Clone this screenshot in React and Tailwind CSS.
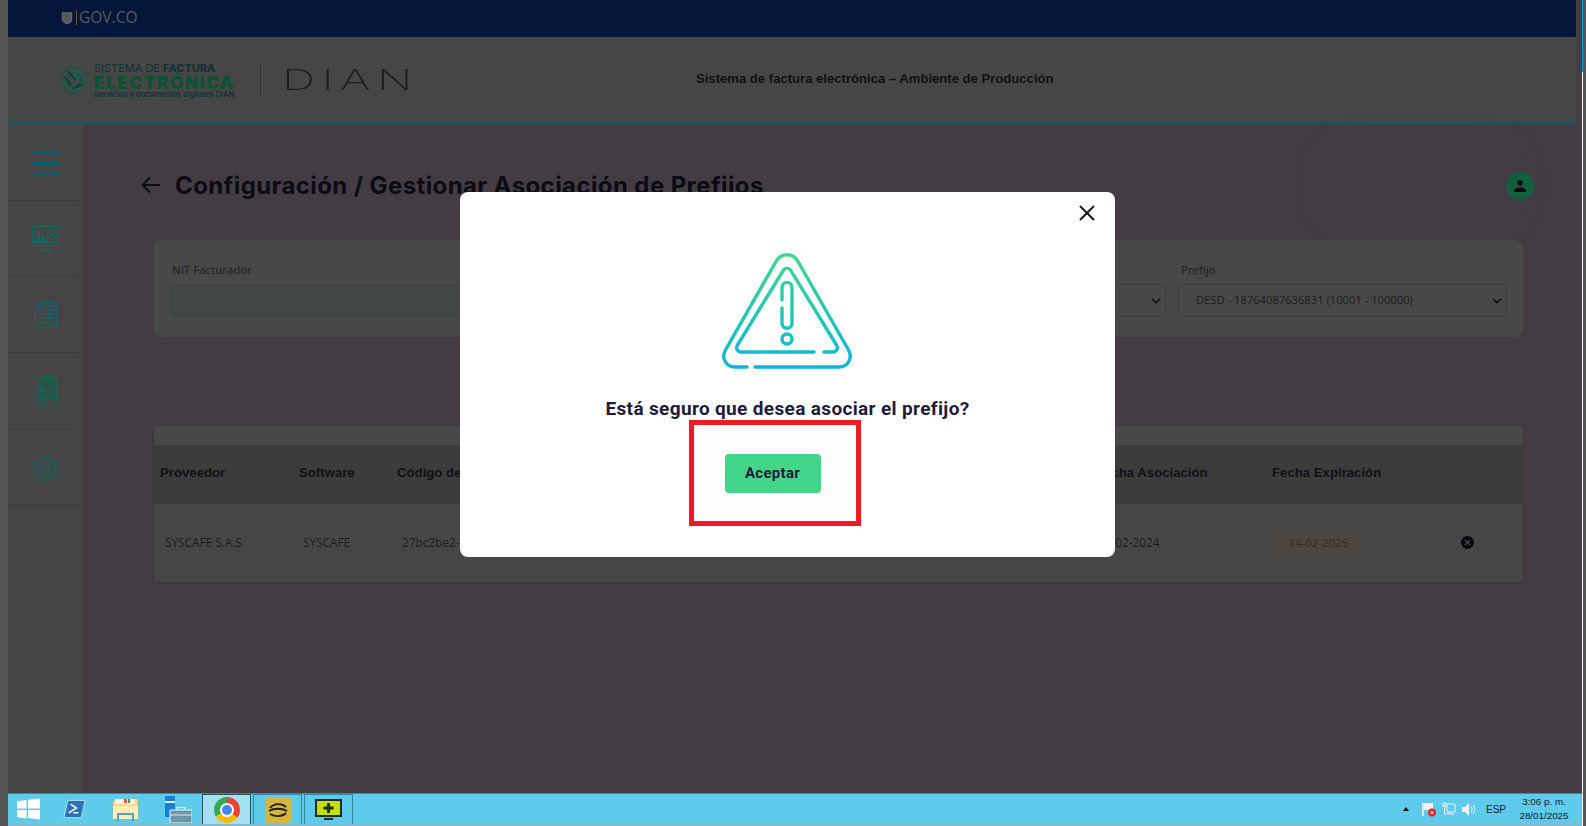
import { X, ChevronDown } from 'lucide-react';

const columnas = [
  { titulo: 'Proveedor', ancho: 'w-[145px]', pl: 'pl-[6px]' },
  { titulo: 'Software', ancho: 'w-[98px]', pl: 'pl-0' },
  { titulo: 'Código de Software', ancho: 'w-[699px]', pl: 'pl-0' },
  { titulo: 'Fecha Asociación', ancho: 'w-[176px]', pl: 'pl-0' },
  { titulo: 'Fecha Expiración', ancho: 'w-[196px]', pl: 'pl-0' },
];

function Hamburguesa() {
  return (
    <div className="flex w-7 flex-col gap-[8px] pt-[2px]">
      <div className="h-[3px] rounded bg-[#05606e]"></div>
      <div className="h-[3px] rounded bg-[#05606e]"></div>
      <div className="h-[3px] rounded bg-[#05606e]"></div>
    </div>
  );
}

function IconoMonitor() {
  return (
    <svg width="30" height="28" viewBox="0 0 30 28" fill="none" stroke="#0a6e64" strokeWidth="1">
      <rect x="1.5" y="1.5" width="27" height="19" rx="1" />
      <path d="M1.5 17.5h27M12 21v4M18 21v4M8.5 26h13" />
      <path d="M6 15V7h2.5v8M8.5 15v-5H11v5M11 15v-3h2.5v3M5 15.5h9" strokeWidth="1.2" />
      <circle cx="21" cy="10" r="4.6" />
      <path d="M21 6.5V10l2.8 1.8" />
    </svg>
  );
}

function IconoDocumento() {
  return (
    <svg width="24" height="28" viewBox="0 0 24 28" fill="none" stroke="#0a6874" strokeWidth="1.100">
      <path d="M8 1.5h13a1.5 1.5 0 0 1 1.500 1.500v21.500a1.500 1.500 0 0 1-1.500 1.500H3a1.500 1.500 0 0 1-1.500-1.500V8z" />
      <path d="M8 1.500V8H1.500M12 5.500h7M19 5.500v4h-6M5 13h6M5 17h6M5 21h13M14 13h5v4.500h-5z" />
    </svg>
  );
}

function IconoClipboard() {
  return (
    <svg width="30" height="32" viewBox="0 0 30 32" fill="none" stroke="#0c6a58" strokeWidth="1">
      <rect x="6.500" y="3.500" width="19" height="20" rx="1" fill="#0e5f4c" fillOpacity="0.45" />
      <path d="M12 3.500V1.500h8v2M9.500 8h5M9.500 12h4M17 8l3-2M12 18l11-10" />
      <path d="M1 24c1-4 3-7 6-9 1 2 1 3 4 4l-2 5M5 28h11l-1-6-6 2-3 2zM22 18c3 1 6 3 6 7v6M22 31v-6M8 31h9" />
      <circle cx="11" cy="16" r="1.700" fill="#0c6a58" />
    </svg>
  );
}

function IconoEngranaje() {
  return (
    <svg width="30" height="30" viewBox="0 0 24 24" fill="none" stroke="#0a6668" strokeWidth="1">
      <path d="M12.220 2h-.44a2 2 0 0 0-2 2v.18a2 2 0 0 1-1 1.730l-.43.250a2 2 0 0 1-2 0l-.15-.080a2 2 0 0 0-2.730.730l-.220.380a2 2 0 0 0 .730 2.730l.150.100a2 2 0 0 1 1 1.720v.510a2 2 0 0 1-1 1.740l-.150.090a2 2 0 0 0-.730 2.730l.220.380a2 2 0 0 0 2.730.730l.150-.080a2 2 0 0 1 2 0l.430.250a2 2 0 0 1 1 1.730V20a2 2 0 0 0 2 2h.440a2 2 0 0 0 2-2v-.18a2 2 0 0 1 1-1.730l.430-.250a2 2 0 0 1 2 0l.150.080a2 2 0 0 0 2.730-.730l.220-.390a2 2 0 0 0-.730-2.730l-.150-.080a2 2 0 0 1-1-1.740v-.500a2 2 0 0 1 1-1.740l.150-.090a2 2 0 0 0 .730-2.730l-.220-.380a2 2 0 0 0-2.730-.730l-.150.080a2 2 0 0 1-2 0l-.430-.250a2 2 0 0 1-1-1.730V4a2 2 0 0 0-2-2z" />
      <circle cx="12" cy="12" r="3.500" />
    </svg>
  );
}

function Globo() {
  return (
    <svg width="30" height="30" viewBox="0 0 30 30" fill="none" strokeWidth="1.600">
      <circle cx="15" cy="15" r="13.500" stroke="#0c5a4c" strokeDasharray="3 1.500" />
      <circle cx="15" cy="15" r="10" stroke="#0e6a48" strokeDasharray="6 2" />
      <circle cx="15" cy="15" r="6.500" stroke="#0a4a50" strokeDasharray="8 3" />
      <circle cx="18" cy="11" r="2.500" stroke="#0e6a48" />
      <path d="M4 12c4 1 6 4 8 8M8 6c4 2 5 6 9 9M14 24c3-2 7-2 11-6" stroke="#0b3d40" />
    </svg>
  );
}

function Alerta() {
  return (
    <svg width="130" height="116" viewBox="0 0 130 116" fill="none" strokeWidth="3.400" strokeLinecap="round" strokeLinejoin="round">
      <defs>
        <linearGradient id="alerta" gradientUnits="userSpaceOnUse" x1="65" y1="0" x2="65" y2="116">
          <stop offset="0" stopColor="#3fd98a" />
          <stop offset="1" stopColor="#0cb5dc" />
        </linearGradient>
      </defs>
      <path d="M25 114H13C4 114 -1 105 3.500 97L54 8.500C59 -0.500 71 -0.500 76 8.500L126.500 97C131 105 126 114 117 114H33" stroke="url(#alerta)" />
      <path d="M92 99H19C15.500 99 13.500 95.500 15.500 92L61.500 17C63 14.500 67 14.500 68.500 17L114.500 92C116.500 95.500 114.500 99 111 99H102" stroke="url(#alerta)" />
      <path d="M60 47V35C60 27.500 70 27.500 70 35V70C70 77 60 77 60 70V55" stroke="url(#alerta)" />
      <circle cx="65" cy="88" r="5" stroke="url(#alerta)" transform="translate(0 -2)" />
    </svg>
  );
}

function IconosTaskbar() {
  return (
    <div className="flex h-full items-center">
      <div className="flex w-[45px] justify-start pl-[9px]">
        <svg width="23" height="22" viewBox="0 0 24 22" fill="#ffffff">
          <path d="M0 3l10-1.500v9H0zM11.500 1.300L24 0v10.500H11.500zM0 12h10v8.800L0 19.500zM11.500 12H24v10l-12.500-1.500z" />
        </svg>
      </div>
      <div className="flex w-[42px] justify-center">
        <svg width="23" height="20" viewBox="0 0 24 20">
          <path d="M5 1h18l-4 18H1z" fill="#2b74b8" stroke="#dbeefa" strokeWidth="0.800" />
          <path d="M8 5l6 4-8 5M11 14h5" fill="none" stroke="#ffffff" strokeWidth="1.600" />
        </svg>
      </div>
      <div className="flex w-[60px] justify-center">
        <svg width="27" height="26" viewBox="0 0 27 26">
          <path d="M1 5h8l2-2h15v20H1z" fill="#f6dc8a" stroke="#c9a94e" strokeWidth="0.600" />
          <path d="M3 3h20v5H3z" fill="#fff6d8" />
          <path d="M12 3h3v4h-3z" fill="#d9534f" />
          <path d="M16 3h2v4h-2z" fill="#4a9a5a" />
          <path d="M1 10h25v13H1z" fill="#fbeeb6" />
          <path d="M6 25v-7h15v7M6 18h15" fill="none" stroke="#5d9cc4" strokeWidth="2" />
        </svg>
      </div>
      <div className="flex w-[47px] justify-center">
        <svg width="27" height="27" viewBox="0 0 27 27">
          <path d="M0 0h10v21H0z" fill="#1681d4" />
          <path d="M0 5h10v2H0z" fill="#e8f4fb" />
          <path d="M5 14h22v13H5z" fill="#6f96a8" stroke="#e8f4fb" />
          <path d="M12 14v-2.500h8V14M5 19h22" fill="none" stroke="#dfe9ee" strokeWidth="1.200" />
        </svg>
      </div>
      <div className="flex h-full w-[49px] items-center justify-center border-x border-t border-[#25545f] bg-[#a3e0f3]">
        <div className="relative h-[26px] w-[26px] rounded-full bg-[conic-gradient(#ea4335_0deg_125deg,#fbbc04_125deg_240deg,#34a853_240deg_360deg)]">
          <div className="absolute top-[6px] left-[6px] h-[14px] w-[14px] rounded-full border-2 border-white bg-[#4285f4]"></div>
        </div>
      </div>
      <div className="ml-[2px] flex h-full w-[49px] items-center justify-center border-x border-t border-[#33899f]">
        <div className="flex h-[26px] w-[26px] items-center justify-center rounded-[4px] bg-[#d5b53e]">
          <svg width="20" height="16" viewBox="0 0 20 16" fill="none" stroke="#1f1f1f" strokeWidth="1.800">
            <path d="M2 6c4-5 12-5 16-1M1 9c5-3 13-3 18 0M2 12c5 3 12 3 16-1" />
          </svg>
        </div>
      </div>
      <div className="ml-[2px] flex h-full w-[49px] items-center justify-center border-x border-t border-[#33899f]">
        <svg width="27" height="22" viewBox="0 0 27 22">
          <path d="M0 0h27v18H0z" fill="#1f2b2e" />
          <path d="M2 2h23v14H2z" fill="#c4e000" />
          <path d="M12 4h3v3.500h3.500v3H15V14h-3v-3.500H8.500v-3H12z" fill="#1f2b2e" />
          <path d="M9 19h9v2H9z" fill="#1f2b2e" />
        </svg>
      </div>
    </div>
  );
}

function Bandeja() {
  return (
    <div className="ml-auto flex h-full items-center font-['Liberation_Sans',sans-serif] text-[#123]">
      <div className="h-0 w-0 border-x-[3.500px] border-b-[4px] border-x-transparent border-b-[#111]"></div>
      <svg className="ml-[13px]" width="14" height="15" viewBox="0 0 14 15">
        <path d="M1 1v13" stroke="#f4f4f4" strokeWidth="1.600" />
        <path d="M2 1h9v7H2z" fill="#f4f4f4" />
        <circle cx="10" cy="10.500" r="4" fill="#e3242b" />
        <path d="M8.500 9l3 3M11.500 9l-3 3" stroke="#ffffff" strokeWidth="1" />
      </svg>
      <svg className="ml-[6px]" width="14" height="14" viewBox="0 0 14 14" fill="none" stroke="#f2f2f2" strokeWidth="1">
        <path d="M5 2h8v8H5zM7 10v2h5M1 1h3v3H1zM2.500 4v8h3" />
      </svg>
      <svg className="ml-[6px]" width="14" height="13" viewBox="0 0 14 13">
        <path d="M0 4h3l4-4v13L3 9H0z" fill="#f2f2f2" />
        <path d="M9 3.500c1.500 2 1.500 4 0 6M11 2c2.400 3 2.400 6 0 9" fill="none" stroke="#f2f2f2" strokeWidth="1" />
      </svg>
      <span className="ml-[10px] text-[10px]">ESP</span>
      <div className="ml-[8px] flex w-[60px] flex-col items-center text-[9.800px] leading-[14px]">
        <span>3:06 p. m.</span>
        <span>28/01/2025</span>
      </div>
      <div className="w-[8px]"></div>
    </div>
  );
}

export default function App() {
  return (
    <div className="relative flex h-screen w-full overflow-hidden bg-[#444] font-['Liberation_Sans',sans-serif]">
      <div className="w-2 shrink-0 bg-[#555555]"></div>

      <div className="flex min-w-0 flex-1 flex-col bg-[#443c43]">
        {/* BARRA GOV.CO */}
        <div className="mr-[6px] flex h-[37px] shrink-0 items-center bg-[#04173a] pb-[2px] pl-[53px]">
          <svg width="12" height="14" viewBox="0 0 12 14" fill="none" stroke="#66666a" strokeWidth="1.500">
            <path d="M1.500 2h9v6c0 2-2 4-4.500 4.500C4 12 1.500 10 1.500 8z" fill="#55555a" />
          </svg>
          <div className="ml-[3px] h-[14px] w-[1px] bg-[#6b5a20]"></div>
          <span className="ml-[2px] font-['Open_Sans',sans-serif] text-[15.500px] text-[#5a5a60]">GOV.CO</span>
        </div>

        {/* HEADER */}
        <header className="relative mr-[6px] flex h-[87px] shrink-0 items-center border-b-2 border-[#0f5a6a] bg-[#464646] pl-[51px]">
          <Globo />
          <div className="ml-[5px] flex flex-col font-['Inter',sans-serif]">
            <span className="text-[11px] leading-[14px] text-[#0f3034]">SISTEMA DE <b>FACTURA</b></span>
            <span className="text-[17.500px] leading-[15px] font-black tracking-[1.300px] text-[#0d5231]">ELECTRÓNICA</span>
            <span className="text-[7.500px] leading-[9px] font-semibold text-[#0f3034]">Servicios y documentos digitales DIAN</span>
          </div>
          <div className="ml-[25px] h-[33px] w-[1px] bg-[#333]"></div>
          <span className="ml-[21px] origin-left scale-x-[1.65] font-['Inter',sans-serif] text-[28px] leading-none font-extralight tracking-[4px] text-[#1e1e1e]">DIAN</span>
          <span className="absolute left-[688px] mt-[-2px] text-[13.100px] font-bold text-[#101010]">Sistema de factura electrónica – Ambiente de Producción</span>
        </header>

        <div className="flex min-h-0 flex-1">
          {/* SIDEBAR */}
          <aside className="w-[75px] shrink-0 bg-[#454545] pr-1">
            <div className="flex h-[77px] items-center justify-center border-b border-[#3d3d3d] pl-1"><Hamburguesa /></div>
            <div className="flex h-[76px] items-center justify-center border-b border-[#3d3d3d] pl-1"><IconoMonitor /></div>
            <div className="flex h-[76px] items-center justify-center border-b border-[#3d3d3d] pl-1"><IconoDocumento /></div>
            <div className="flex h-[77px] items-center justify-center border-b border-[#3d3d3d] pl-1"><IconoClipboard /></div>
            <div className="flex h-[76px] items-center justify-center border-b border-[#3d3d3d] pl-1"><IconoEngranaje /></div>
          </aside>

          {/* CONTENIDO */}
          <main className="min-w-0 flex-1 bg-[#443c43] pt-[45px] pr-[59px] pl-[71px]">
            <div className="flex h-[34px] items-center">
              <svg className="mt-[-3px] -ml-[15px]" width="24" height="24" viewBox="0 0 24 24" fill="none" stroke="#0d0d14" strokeWidth="2">
                <path d="M21 12H4M11 4.500L3.500 12l7.500 7.500" />
              </svg>
              <h1 className="ml-[12px] font-['Inter',sans-serif] text-[24px] font-bold tracking-[0.4px] whitespace-nowrap text-[#0b0b16]">Configuración / Gestionar Asociación de Prefijos</h1>
              <div className="mt-[-4px] ml-auto h-[28px] w-[150px] rounded-full bg-[#464145] blur-xl"></div>
              <div className="mr-[-11px] ml-[10px] flex h-[28px] w-[28px] shrink-0 items-center justify-center rounded-full bg-[#0f6040]">
                <svg width="14" height="14" viewBox="0 0 14 14" fill="#06090a">
                  <circle cx="7" cy="4" r="2.800" />
                  <path d="M1 13c0-3.500 3-4.500 6-4.500s6 1 6 4.500z" />
                </svg>
              </div>
            </div>

            {/* FILTROS */}
            <section className="mt-[37px] grid h-[97px] grid-cols-[329px_329px_1fr_329px] gap-x-3 rounded-lg bg-[#484848] pt-[22px] pr-[16px] pl-[16px] font-['Open_Sans',sans-serif] text-[11.500px] text-[#1d1d1d]">
              <div>
                <p className="mb-[6px] pl-[2px] leading-[16px]">NIT Facturador</p>
                <div className="h-[33px] rounded border border-[#3f413f] bg-[#434743]"></div>
              </div>
              <div></div>
              <div>
                <p className="mb-[6px] leading-[16px]">&nbsp;</p>
                <div className="flex h-[33px] items-center justify-end rounded border border-[#3e3e3e] pr-[2px]"><ChevronDown size={14} strokeWidth={3} color="#111" /></div>
              </div>
              <div>
                <p className="mb-[6px] pl-[3px] leading-[16px]">Prefijo</p>
                <div className="flex h-[33px] items-center justify-between rounded border border-[#3e3e3e] pr-[2px] pl-[17px] text-[11.200px]">
                  <span>DESD - 18764087636831 (10001 - 100000)</span>
                  <ChevronDown size={14} strokeWidth={3} color="#111" />
                </div>
              </div>
            </section>

            {/* TABLA */}
            <section className="mt-[89px] rounded-b bg-[#484848] pt-[19px] shadow-[0_1px_2px_#333]">
              <table className="w-full table-fixed border-collapse text-left">
                <thead>
                  <tr className="h-[59px] bg-[#3c3c3c] text-[13.200px] font-bold text-[#101014]">
                    {columnas.map(c => (
                      <th key={c.titulo} className={`${c.ancho} ${c.pl} pb-[4px] font-bold`}>{c.titulo}</th>
                    ))}
                    <th></th>
                  </tr>
                </thead>
                <tbody>
                  <tr className="h-[78px] bg-[#464646] font-['Open_Sans',sans-serif] text-[11.800px] text-[#1d1d1d]">
                    <td className="pl-[11px]">SYSCAFE S.A.S</td>
                    <td className="pl-[4px]">SYSCAFE</td>
                    <td className="pl-[5px]">27bc2be2-0</td>
                    <td className="pl-[2px]">14-02-2024</td>
                    <td className="pl-[5px]">
                      <span className="inline-block h-[28px] w-[83px] rounded bg-[#4c4540] text-center text-[11.500px] leading-[28px] text-[#3d2c10]">14-02-2025</span>
                    </td>
                    <td className="pb-[2px]">
                      <div className="ml-[-7px] flex h-[13px] w-[13px] items-center justify-center rounded-full bg-[#08080c]">
                        <X size={9} strokeWidth={3.500} color="#464646" />
                      </div>
                    </td>
                  </tr>
                </tbody>
              </table>
            </section>
          </main>
        </div>

        {/* TASKBAR */}
        <footer className="flex h-[33px] shrink-0 items-center border-t border-b-2 border-t-[#3d8ba3] border-b-[#7fb9cb] bg-[#5ecbea]">
          <IconosTaskbar />
          <Bandeja />
        </footer>
      </div>

      {/* SCROLL DERECHO */}
      <div className="flex w-[4px] shrink-0 bg-[#555555]">
        <div className="flex w-px flex-col bg-white">
          <div className="h-[72px] bg-[#00a0dc]"></div>
        </div>
      </div>

      {/* MODAL */}
      <div className="absolute top-[192px] left-[460px] flex h-[365px] w-[655px] flex-col items-center rounded-lg bg-white">
        <button className="absolute top-[8px] right-[15px]"><X size={26} strokeWidth={1.800} color="#16162a" /></button>
        <div className="mt-[61px] -ml-[1px]"><Alerta /></div>
        <p className="mt-[27px] font-['Roboto',sans-serif] text-[19px] leading-[26px] font-bold tracking-[0.35px] text-[#1e1c3a]">Está seguro que desea asociar el prefijo?</p>
        <div className="mt-[-2px] -ml-[25px] flex h-[106px] w-[172px] items-start justify-center border-[5px] border-[#ed1c24] bg-[#fdfdfd] pt-[29px] pr-[5px]">
          <button className="h-[39px] w-[96px] rounded bg-[#43d68b] font-['Roboto',sans-serif] text-[15px] font-bold tracking-[0.3px] text-[#1e1c3a]">Aceptar</button>
        </div>
      </div>
    </div>
  );
}
